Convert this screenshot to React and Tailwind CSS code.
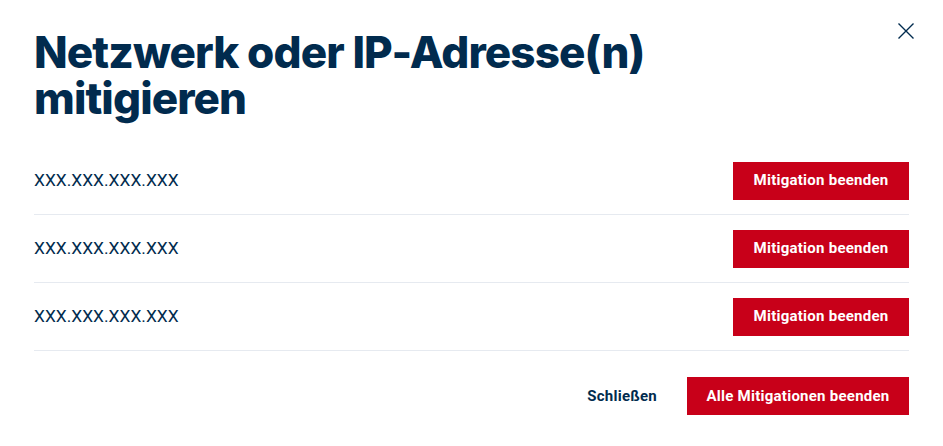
export default function App() {
  const rows = ["XXX.XXX.XXX.XXX", "XXX.XXX.XXX.XXX", "XXX.XXX.XXX.XXX"];
  return (
    <div className="relative w-[943px] h-[446px] bg-white px-[34px] pt-[29px]" style={{ fontFamily: "Roboto, 'Liberation Sans', sans-serif" }}>
      <button className="absolute right-[29px] top-[23px] w-[16px] h-[16px] text-[#012b4e]">
        <svg viewBox="0 0 16 16" width="16" height="16" fill="none" stroke="currentColor" strokeWidth="1.4">
          <path d="M0.5 0.5 L15.5 15.5 M15.5 0.5 L0.5 15.5" />
        </svg>
      </button>
      <h1 className="text-[#012b4e] font-extrabold text-[44px] leading-[46px] tracking-[-0.9px] w-[640px]" style={{ fontFamily: "Inter, sans-serif" }}>
        Netzwerk oder IP-Adresse(n) mitigieren
      </h1>
      <div className="mt-[26px]">
        {rows.map((r, i) => (
          <div key={i} className="flex items-center justify-between h-[68px] border-b border-[#e6eaf0]">
            <span className="text-[#012b4e] text-[17.4px]">{r}</span>
            <button className="bg-[#c80019] text-white text-[15px] tracking-[0.25px] font-bold w-[176px] h-[38px]">Mitigation beenden</button>
          </div>
        ))}
      </div>
      <div className="flex justify-end items-center mt-[26px] gap-[30px]">
        <button className="text-[#012b4e] text-[15px] tracking-[0.25px] font-bold">Schließen</button>
        <button className="bg-[#c80019] text-white text-[15px] tracking-[0.25px] font-bold w-[222px] h-[38px]">Alle Mitigationen beenden</button>
      </div>
    </div>
  );
}
